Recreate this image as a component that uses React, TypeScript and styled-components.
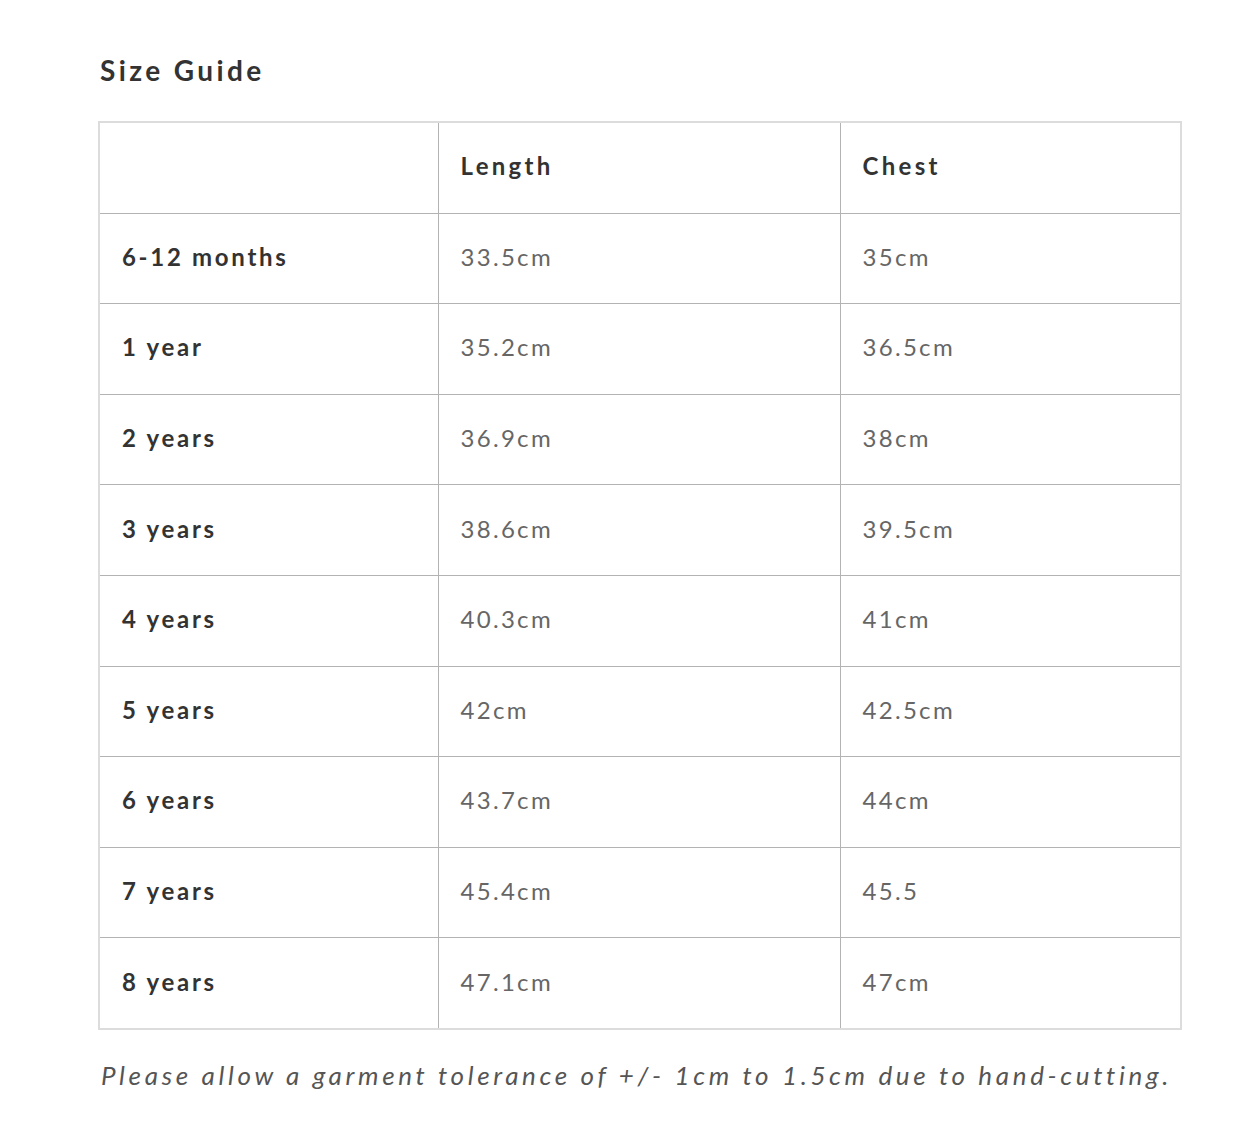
import React from "react";
import styled, { createGlobalStyle } from "styled-components";

const Global = createGlobalStyle`
  html, body { margin: 0; padding: 0; background: #fff; }
  body { font-family: "Lato", "Liberation Sans", sans-serif; }
`;

const Page = styled.main`
  padding: 54px 64px 40px 98px;
`;

const Title = styled.h2`
  margin: 0 0 35px 2px;
  font-size: 28px;
  font-weight: 700;
  letter-spacing: 3.4px;
  color: #333;
  line-height: 32px;
`;

const Table = styled.table`
  width: 1082px;
  border-collapse: collapse;
  border: 2px solid #dcdcdc;
  table-layout: fixed;
`;

const Col = styled.col<{ $w: number }>`
  width: ${(p) => p.$w}px;
`;

const Cell = styled.td<{ $strong?: boolean; $head?: boolean }>`
  height: 85.6px;
  padding: 0 0 4px 22px;
  border: 1px solid #b3b3b3;
  font-size: 24px;
  letter-spacing: ${(p) => (p.$head ? "3.3px" : p.$strong ? "2.7px" : "2.3px")};
  font-weight: ${(p) => (p.$strong ? 700 : 400)};
  color: ${(p) => (p.$strong ? "#333" : "#666")};
  text-align: left;
  vertical-align: middle;
`;

const Note = styled.p`
  margin: 29px 0 0 3px;
  font-size: 26px;
  font-style: italic;
  letter-spacing: 3.65px;
  color: #555;
  white-space: nowrap;
`;

const rows: [string, string, string][] = [
  ["6-12 months", "33.5cm", "35cm"],
  ["1 year", "35.2cm", "36.5cm"],
  ["2 years", "36.9cm", "38cm"],
  ["3 years", "38.6cm", "39.5cm"],
  ["4 years", "40.3cm", "41cm"],
  ["5 years", "42cm", "42.5cm"],
  ["6 years", "43.7cm", "44cm"],
  ["7 years", "45.4cm", "45.5"],
  ["8 years", "47.1cm", "47cm"],
];

export default function App() {
  return (
    <>
      <Global />
      <Page>
        <Title>Size Guide</Title>
        <Table>
          <colgroup>
            <Col $w={339} />
            <Col $w={402} />
            <Col $w={341} />
          </colgroup>
          <thead>
            <tr>
              <Cell as="th" />
              <Cell as="th" $strong $head>Length</Cell>
              <Cell as="th" $strong $head>Chest</Cell>
            </tr>
          </thead>
          <tbody>
            {rows.map(([label, len, chest]) => (
              <tr key={label}>
                <Cell $strong>{label}</Cell>
                <Cell>{len}</Cell>
                <Cell>{chest}</Cell>
              </tr>
            ))}
          </tbody>
        </Table>
        <Note>Please allow a garment tolerance of +/- 1cm to 1.5cm due to hand-cutting.</Note>
      </Page>
    </>
  );
}
